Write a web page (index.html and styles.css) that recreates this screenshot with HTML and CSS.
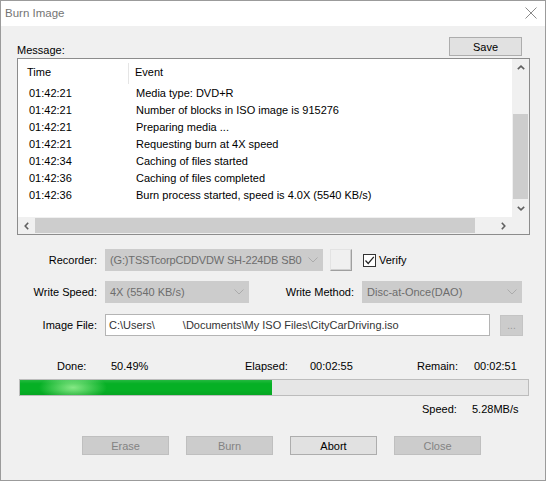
FILE: index.html
```html
<!DOCTYPE html>
<html>
<head>
<meta charset="utf-8">
<link rel="stylesheet" href="styles.css">
</head>
<body>
<div class="window">
  <div class="titlebar">
    <span class="title">Burn Image</span>
    <svg class="close" width="12" height="12" viewBox="0 0 12 12"><path d="M0.5 0.5L11.5 11.5M11.5 0.5L0.5 11.5" stroke="#8a8a8a" stroke-width="1" fill="none"/></svg>
  </div>
  <div class="content">
    <div class="msgrow">
      <span class="msglabel">Message:</span>
      <div class="btn save">Save</div>
    </div>
    <div class="listbox">
      <div class="listmain">
        <div class="listview">
          <div class="lvhead">
            <div class="col-time hcell">Time</div>
            <div class="hsep"></div>
            <div class="col-event hcell">Event</div>
          </div>
          <div class="lvrow"><div class="col-time">01:42:21</div><div class="col-event">Media type: DVD+R</div></div>
          <div class="lvrow"><div class="col-time">01:42:21</div><div class="col-event">Number of blocks in ISO image is 915276</div></div>
          <div class="lvrow"><div class="col-time">01:42:21</div><div class="col-event">Preparing media ...</div></div>
          <div class="lvrow"><div class="col-time">01:42:21</div><div class="col-event">Requesting burn at 4X speed</div></div>
          <div class="lvrow"><div class="col-time">01:42:34</div><div class="col-event">Caching of files started</div></div>
          <div class="lvrow"><div class="col-time">01:42:36</div><div class="col-event">Caching of files completed</div></div>
          <div class="lvrow"><div class="col-time">01:42:36</div><div class="col-event">Burn process started, speed is 4.0X (5540 KB/s)</div></div>
        </div>
        <div class="vscroll">
          <div class="sarrow"><svg width="8" height="5" viewBox="0 0 8 5"><path d="M0.8 4.2L4 1.2L7.2 4.2" stroke="#606060" stroke-width="1.6" fill="none"/></svg></div>
          <div class="vtrack"><div class="vthumb"></div></div>
          <div class="sarrow"><svg width="8" height="5" viewBox="0 0 8 5"><path d="M0.8 0.8L4 3.8L7.2 0.8" stroke="#606060" stroke-width="1.6" fill="none"/></svg></div>
        </div>
      </div>
      <div class="listbottom">
        <div class="hscroll">
          <div class="sarrow"><svg width="5" height="8" viewBox="0 0 5 8"><path d="M4.2 0.8L1.2 4L4.2 7.2" stroke="#606060" stroke-width="1.6" fill="none"/></svg></div>
          <div class="htrack"><div class="hthumb"></div></div>
          <div class="sarrow"><svg width="5" height="8" viewBox="0 0 5 8"><path d="M0.8 0.8L3.8 4L0.8 7.2" stroke="#606060" stroke-width="1.6" fill="none"/></svg></div>
        </div>
        <div class="corner"></div>
      </div>
    </div>

    <div class="formrow r1">
      <span class="flabel">Recorder:</span>
      <div class="combo w-rec"><span class="ctext tight">(G:)TSSTcorpCDDVDW SH-224DB SB0</span><svg class="chev" width="10" height="6" viewBox="0 0 10 6"><path d="M0.5 0.5L5 5L9.5 0.5" stroke="#ababab" stroke-width="1" fill="none"/></svg></div>
      <div class="sqbtn"></div>
      <div class="check"><svg width="11" height="11" viewBox="0 0 11 11"><path d="M1.5 5.5L4.2 8.5L9.8 1.8" stroke="#222" stroke-width="1.2" fill="none"/></svg></div>
      <span class="verify">Verify</span>
    </div>
    <div class="formrow r2">
      <span class="flabel">Write Speed:</span>
      <div class="combo w-speed"><span class="ctext">4X (5540 KB/s)</span><svg class="chev" width="10" height="6" viewBox="0 0 10 6"><path d="M0.5 0.5L5 5L9.5 0.5" stroke="#ababab" stroke-width="1" fill="none"/></svg></div>
      <span class="flabel wm">Write Method:</span>
      <div class="combo w-method"><span class="ctext">Disc-at-Once(DAO)</span><svg class="chev" width="10" height="6" viewBox="0 0 10 6"><path d="M0.5 0.5L5 5L9.5 0.5" stroke="#ababab" stroke-width="1" fill="none"/></svg></div>
    </div>
    <div class="formrow r3">
      <span class="flabel">Image File:</span>
      <div class="textbox">C:\Users\<span class="redact"></span>\Documents\My ISO Files\CityCarDriving.iso</div>
      <div class="dotbtn">...</div>
    </div>

    <div class="statrow">
      <span class="s-done">Done:</span>
      <span class="s-pct">50.49%</span>
      <span class="s-el">Elapsed:</span>
      <span class="s-elv">00:02:55</span>
      <span class="s-rem">Remain:</span>
      <span class="s-remv">00:02:51</span>
    </div>
    <div class="progress"><div class="pfill" style="width:252px"></div></div>
    <div class="speedrow">
      <span class="s-sp">Speed:</span>
      <span class="s-spv">5.28MB/s</span>
    </div>
    <div class="btnrow">
      <div class="btn big disabled">Erase</div>
      <div class="btn big disabled">Burn</div>
      <div class="btn big">Abort</div>
      <div class="btn big disabled">Close</div>
    </div>
  </div>
</div>
</body>
</html>
```
FILE: styles.css
```css
html { background: #ffffff; }
body {
  margin: 0;
  font-family: "Liberation Sans", Arial, sans-serif;
  font-size: 11px;
  color: #000;
}
.window {
  width: 544px;
  height: 479px;
  border: 1px solid #9b9b9b;
  display: flex;
  flex-direction: column;
  background: #f0f0f0;
}
.titlebar {
  height: 25px;
  background: #ffffff;
  display: flex;
  align-items: center;
  justify-content: space-between;
  padding: 0 8px 0 4px;
  flex: none;
}
.title {
  color: #747474;
  font-size: 11.5px;
  margin-top: -1px;
}
.close { margin-top: -2px; }
.content {
  flex: 1;
  padding-left: 16px;
}
.msgrow {
  margin-top: 11px;
  height: 19px;
  width: 505px;
  display: flex;
  justify-content: space-between;
}
.msglabel {
  padding-top: 6px;
  line-height: 14px;
}
.btn {
  box-sizing: border-box;
  background: #e1e1e1;
  border: 1px solid #adadad;
  display: flex;
  align-items: center;
  justify-content: center;
}
.btn.disabled {
  background: #cccccc;
  border-color: #bfbfbf;
  color: #838383;
}
.save {
  width: 73px;
  height: 19px;
}
.listbox {
  margin-top: 2px;
  width: 513px;
  height: 177px;
  box-sizing: border-box;
  border: 1px solid #8c8c8c;
  background: #fff;
  display: flex;
  flex-direction: column;
}
.listmain {
  height: 158px;
  display: flex;
}
.listview {
  flex: 1;
  overflow: hidden;
}
.lvhead {
  height: 26px;
  display: flex;
  align-items: center;
}
.hsep {
  width: 1px;
  height: 21px;
  background: #e5e5e5;
  margin-top: 2px;
}
.hcell.col-time { padding-left: 9px; width: 101px; }
.col-time {
  box-sizing: content-box;
  width: 99px;
  padding-left: 11px;
  flex: none;
}
.col-event {
  padding-left: 7px;
  white-space: nowrap;
}
.lvhead .col-event { padding-left: 6px; }
.lvrow {
  height: 17px;
  line-height: 17px;
  display: flex;
}
.lvrow .col-event { padding-left: 7px; margin-left: 1px; }
.vscroll {
  width: 17px;
  background: #f0f0f0;
  display: flex;
  flex-direction: column;
}
.sarrow {
  width: 17px;
  height: 17px;
  display: flex;
  align-items: center;
  justify-content: center;
  flex: none;
}
.vtrack {
  flex: 1;
  padding-top: 38px;
  padding-bottom: 1px;
  display: flex;
}
.vthumb {
  flex: 1;
  margin: 0 1px;
  background: #cdcdcd;
}
.listbottom {
  height: 17px;
  display: flex;
}
.hscroll {
  flex: 1;
  display: flex;
  background: #f0f0f0;
}
.htrack {
  flex: 1;
  padding: 1px 0;
  display: flex;
}
.hthumb {
  width: 440px;
  background: #cdcdcd;
}
.corner {
  width: 17px;
  background: #f0f0f0;
}
.formrow {
  display: flex;
  align-items: center;
  height: 22px;
}
.r1 { margin-top: 14px; }
.r2 { margin-top: 10px; }
.r3 { margin-top: 11px; }
.flabel {
  width: 80px;
  text-align: right;
  margin-right: 8px;
  flex: none;
}
.flabel.wm { width: 105px; }
.combo {
  box-sizing: border-box;
  height: 22px;
  background: #cccccc;
  border: 1px solid #cccccc;
  color: #6d6d6d;
  display: flex;
  align-items: center;
  justify-content: space-between;
  padding: 0 4px 0 4px;
  overflow: hidden;
  flex: none;
}
.ctext { white-space: nowrap; }
.ctext.tight { letter-spacing: -0.15px; }
.chev { flex: none; margin-left: 2px; }
.w-rec { width: 218px; }
.w-speed { width: 144px; }
.w-method { width: 160px; }
.sqbtn {
  box-sizing: border-box;
  width: 22px;
  height: 22px;
  margin-left: 7px;
  background: #f0f0f0;
  border: 1px solid;
  border-color: #e3e3e3 #9f9f9f #9f9f9f #e3e3e3;
  box-shadow: inset -1px -1px 0 #d0d0d0;
}
.check {
  box-sizing: border-box;
  width: 13px;
  height: 13px;
  margin-left: 11px;
  border: 1px solid #333;
  background: #fff;
  display: flex;
  align-items: center;
  justify-content: center;
}
.verify { margin-left: 3px; }
.textbox {
  box-sizing: border-box;
  width: 385px;
  height: 22px;
  background: #fff;
  border: 1px solid #b4b4b4;
  color: #333;
  padding-left: 3px;
  display: flex;
  align-items: center;
  white-space: nowrap;
  overflow: hidden;
}
.redact { display: inline-block; width: 28px; }
.dotbtn {
  box-sizing: border-box;
  width: 23px;
  height: 21px;
  margin-left: 10px;
  background: #cccccc;
  border: 1px solid #c4c4c4;
  color: #999;
  font-size: 10px;
  display: flex;
  align-items: center;
  justify-content: center;
}
.statrow, .speedrow {
  height: 16px;
  line-height: 16px;
  display: flex;
  white-space: nowrap;
}
.statrow { margin-top: 22px; }
.s-done { margin-left: 40px; width: 54px; }
.s-pct { width: 134px; }
.s-el { width: 65px; }
.s-elv { width: 107px; }
.s-rem { width: 57px; }
.progress {
  margin-top: 5px;
  margin-left: 2px;
  width: 510px;
  height: 17px;
  box-sizing: border-box;
  border: 1px solid #bcbcbc;
  background: #e6e6e6;
  display: flex;
}
.pfill {
  height: 100%;
  background:
    linear-gradient(to bottom, rgba(255,255,255,0.12), rgba(255,255,255,0) 25%, rgba(255,255,255,0) 70%, rgba(0,0,0,0.06)),
    radial-gradient(ellipse 34px 14px at 53px 50%, #86e886 0%, rgba(134,232,134,0.6) 40%, rgba(6,176,37,0) 100%),
    #06b025;
}
.speedrow { margin-top: 5px; }
.s-sp { margin-left: 405px; width: 50px; }
.btnrow {
  margin-top: 19px;
  margin-left: 65px;
  display: flex;
  gap: 17px;
}
.btn.big {
  width: 87px;
  height: 19px;
}
```
